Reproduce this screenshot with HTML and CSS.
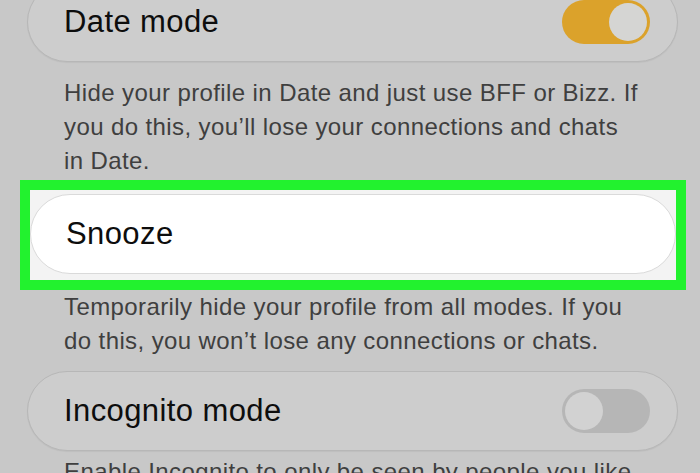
FILE: index.html
```html
<!DOCTYPE html>
<html>
<head>
<meta charset="utf-8">
<link rel="stylesheet" href="styles.css">
</head>
<body>
<div class="screen">
  <div class="card card-first">
    <span class="title">Date mode</span>
    <span class="toggle toggle-on"><span class="knob"></span></span>
  </div>
  <p class="desc">Hide your profile in Date and just use BFF or Bizz. If<br>you do this, you’ll lose your connections and chats<br>in Date.</p>
  <div class="highlight">
    <div class="pill">
      <span class="title">Snooze</span>
    </div>
  </div>
  <p class="desc desc-second">Temporarily hide your profile from all modes. If you<br>do this, you won’t lose any connections or chats.</p>
  <div class="card">
    <span class="title">Incognito mode</span>
    <span class="toggle toggle-off"><span class="knob"></span></span>
  </div>
  <p class="desc desc-last">Enable Incognito to only be seen by people you like.</p>
</div>
</body>
</html>
```

FILE: styles.css
```css
html, body {
  margin: 0;
  padding: 0;
  background: #c8c8c8;
  overflow: hidden;
}

.screen {
  width: 651px;
  margin-left: 27px;
  font-family: "Liberation Sans", Arial, sans-serif;
}

.card {
  box-sizing: border-box;
  height: 80px;
  border: 1.5px solid #b7b7b7;
  border-radius: 40px;
  background: #cdcdcd;
  display: flex;
  align-items: center;
  justify-content: space-between;
  padding: 0 27px 0 36px;
  box-shadow: 0 1px 1px rgba(0, 0, 0, 0.05);
}

.card-first {
  margin-top: -18px;
}

.title {
  font-size: 31px;
  letter-spacing: 0.4px;
  color: #0d0d0d;
}

.toggle {
  box-sizing: border-box;
  width: 88px;
  height: 44px;
  border-radius: 22px;
  display: flex;
  align-items: center;
  padding: 0 3px;
}

.knob {
  box-sizing: border-box;
  width: 38px;
  height: 38px;
  border-radius: 50%;
  background: #d4d4d4;
}

.toggle-on {
  background: #dba22b;
  justify-content: flex-end;
}

.toggle-on .knob {
  background: #d5d5d3;
}

.toggle-off {
  background: #b6b6b6;
  justify-content: flex-start;
}

.toggle-off .knob {
  background: #d2d2d2;
}

.desc {
  margin: 14px 0 0 0;
  padding-left: 37px;
  font-size: 24px;
  letter-spacing: 0.4px;
  line-height: 34px;
  color: #3f3f3f;
}

.desc-second {
  margin-top: 0;
  margin-bottom: 13px;
}

.desc-last {
  margin-top: 4px;
}

.highlight {
  box-sizing: border-box;
  width: 666px;
  height: 110px;
  margin: 2px 0 0 -7px;
  border: 10px solid #22f22e;
  background: #f3f3f3;
  padding: 4px 0 6px 0;
}

.pill {
  box-sizing: border-box;
  height: 80px;
  border: 1.5px solid #dadada;
  border-radius: 40px;
  background: #ffffff;
  display: flex;
  align-items: center;
  padding-left: 35px;
}
```
